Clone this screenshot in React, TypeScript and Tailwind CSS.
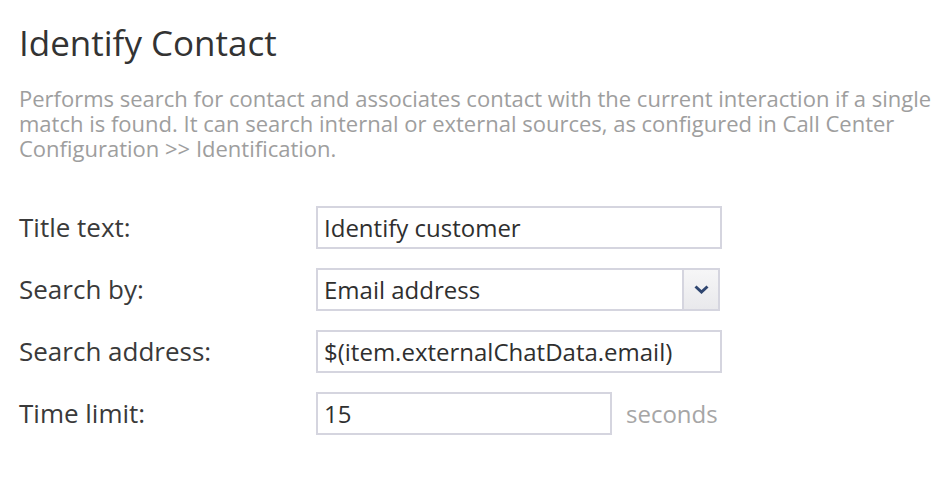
const font = { fontFamily: '"Open Sans", "Noto Sans", sans-serif' }

const rows = [
  { label: 'Title text:', value: 'Identify customer', kind: 'input' },
  { label: 'Search by:', value: 'Email address', kind: 'select' },
  { label: 'Search address:', value: '$(item.externalChatData.email)', kind: 'input' },
  { label: 'Time limit:', value: '15', kind: 'time' },
]

function Field({ value, kind }: { value: string; kind: string }) {
  if (kind === 'select') {
    return (
      <div className="flex h-[43px] w-[404px] border-2 border-[#d5d5df] bg-white">
        <div className="flex flex-1 items-center pl-[6px] text-[24px] text-[#2f2f2f]">{value}</div>
        <div className="flex w-[36px] items-center justify-center border-l-2 border-[#d5d5df] bg-gradient-to-b from-[#f6f6f7] to-[#e9e9ec]">
          <svg width="15" height="9" viewBox="0 0 15 9">
            <path d="M1.5 1.5 L7.5 7 L13.5 1.5" fill="none" stroke="#2f4670" strokeWidth="3" />
          </svg>
        </div>
      </div>
    )
  }
  if (kind === 'time') {
    return (
      <div className="flex items-center">
        <div className="flex h-[43px] w-[296px] items-center border-2 border-[#d5d5df] bg-white pl-[6px] text-[24px] text-[#2f2f2f]">
          {value}
        </div>
        <span className="ml-[14px] text-[24px] text-[#a6a6a6]">seconds</span>
      </div>
    )
  }
  return (
    <div className="flex h-[43px] w-[406px] items-center border-2 border-[#d5d5df] bg-white pl-[6px] text-[24px] text-[#2f2f2f]">
      {value}
    </div>
  )
}

export default function App() {
  return (
    <div className="h-[490px] w-[952px] bg-white pl-[19px] pt-[22px]" style={font}>
      <h1 className="text-[35px] leading-[42px] text-[#333]">Identify Contact</h1>

      <p className="mt-[22px] w-[920px] text-[22px] leading-[25px] text-[#9e9e9e]">
        Performs search for contact and associates contact with the current interaction if a single
        match is found. It can search internal or external sources, as configured in Call Center
        Configuration &gt;&gt; Identification.
      </p>

      <div className="mt-[45px] flex flex-col gap-[19px]">
        {rows.map((r) => (
          <div key={r.label} className="flex items-center">
            <div className="w-[297px] text-[26px] text-[#3a3a3a]">{r.label}</div>
            <Field value={r.value} kind={r.kind} />
          </div>
        ))}
      </div>
    </div>
  )
}
